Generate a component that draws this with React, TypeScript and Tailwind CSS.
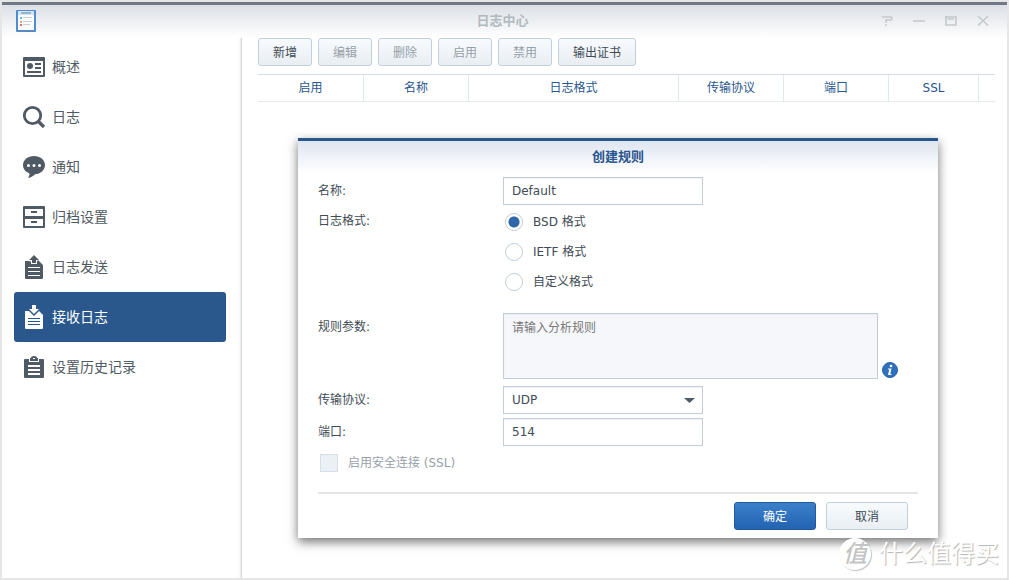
import type { ReactNode } from 'react';
import { clsx } from 'clsx';

interface NavItem {
  label: string;
  icon: ReactNode;
  active?: boolean;
}

const NAV_ITEMS: NavItem[] = [
  {
    label: '概述',
    icon: (
      <path
        fillRule="evenodd"
        d="M2 2h20a1 1 0 011 1v18a1 1 0 01-1 1H2a1 1 0 01-1-1V3a1 1 0 011-1zM3 6v14h18V6zM8 8a3 3 0 110 6 3 3 0 010-6zM13 8h6v2h-6zM13 12h6v2h-6zM5 16h14v2H5z"
      />
    ),
  },
  {
    label: '日志',
    icon: (
      <>
        <circle cx="10.5" cy="10.5" r="8.2" fill="none" stroke="currentColor" strokeWidth="2.8" />
        <path d="M16.5 16.5l5.5 5.5" fill="none" stroke="currentColor" strokeWidth="3.2" />
      </>
    ),
  },
  {
    label: '通知',
    icon: (
      <path
        fillRule="evenodd"
        d="M12 1c6.1 0 11 3.9 11 9s-4.500 9-10 9.200C11.500 20.800 9 22.600 6 23c1-1.200 1.500-2.600 1.500-4.500C3.600 17 1 13.900 1 10c0-5.100 4.900-9 11-9zM6.500 9a1.500 1.500 0 100 3 1.500 1.500 0 000-3zM12 9a1.500 1.500 0 100 3 1.500 1.500 0 000-3zM17.500 9a1.500 1.500 0 100 3 1.500 1.500 0 000-3z"
      />
    ),
  },
  {
    label: '归档设置',
    icon: (
      <path
        fillRule="evenodd"
        d="M2 1h20a1 1 0 011 1v20a1 1 0 01-1 1H2a1 1 0 01-1-1V2a1 1 0 011-1zM3 4v7h18V4zM3 14v7h18v-7zM9 6h6v2H9zM9 16h6v2H9z"
      />
    ),
  },
  {
    label: '日志发送',
    icon: (
      <path
        fillRule="evenodd"
        d="M12 0l5 5h-3v3h-4V5H7zM3 6h3l3 0.500V9h6V6.500L16 5l5 5v13a1 1 0 01-1 1H4a1 1 0 01-1-1zM6 12v1h12v-1zM6 16v1h12v-1zM6 20v1h12v-1z"
      />
    ),
  },
  {
    label: '接收日志',
    active: true,
    icon: (
      <path
        fillRule="evenodd"
        d="M10 0h4v4h3l-5 5-5-5h3zM3 6h4l5 5 5-5 4 4v13a1 1 0 01-1 1H4a1 1 0 01-1-1zM6 13v1h12v-1zM6 16v1h12v-1zM6 19v1h12v-1z"
      />
    ),
  },
  {
    label: '设置历史记录',
    icon: (
      <path
        fillRule="evenodd"
        d="M3 4h4v3h10V4h4a1 1 0 011 1v17a1 1 0 01-1 1H3a1 1 0 01-1-1V5a1 1 0 011-1zM9 3a3 2 0 016 0h1v3H8V3zM11 3v1h2V3zM6 10v2h12v-2zM6 14v2h12v-2zM6 18v2h12v-2z"
      />
    ),
  },
];

const TOOLBAR = [
  { label: '新增', enabled: true },
  { label: '编辑', enabled: false },
  { label: '删除', enabled: false },
  { label: '启用', enabled: false },
  { label: '禁用', enabled: false },
  { label: '输出证书', enabled: true },
];

const COLUMNS = [
  { label: '启用', width: 'w-[106px]' },
  { label: '名称', width: 'w-[105px]' },
  { label: '日志格式', width: 'w-[210px]' },
  { label: '传输协议', width: 'w-[105px]' },
  { label: '端口', width: 'w-[105px]' },
  { label: 'SSL', width: 'w-[90px]' },
];

const FORMATS = [
  { value: 'bsd', label: 'BSD 格式' },
  { value: 'ietf', label: 'IETF 格式' },
  { value: 'custom', label: '自定义格式' },
];

const WINDOW_CONTROLS = [
  { label: '帮助', icon: <path d="M1 2h9q1 0 1 1v1q0 1-1 1H5v3M4 10h2" /> },
  { label: '最小化', icon: <path d="M0 6h12" /> },
  { label: '最大化', icon: <path d="M0 2h12M1 1v9h10V1M3 4h6" /> },
  { label: '关闭', icon: <path d="M1 1l10 9.500M11 1L1 10.500" /> },
];

const LABEL = 'w-[185px] shrink-0 leading-7';
const FIELD =
  'border border-[#c3cdda] bg-white px-2 text-[#414b55] outline-none shadow-[inset_0_1px_1px_#eef1f4]';
const BUTTON = 'h-7 rounded-[3px] border pt-0.5 text-center leading-4';
const LIGHT_BUTTON = 'border-[#c3cfdb] bg-linear-to-b from-[#f7fbfe] to-[#e9eef3]';

function TitleBar() {
  return (
    <header className="flex h-9 items-center border-t-[3px] border-[#717885] bg-linear-to-b from-[#dce0e6] to-white px-[14px] pb-0.5">
      <div className="flex-1">
        <svg className="h-6 w-5" viewBox="0 0 20 24">
          <rect y="1" width="20" height="22" rx="1" fill="#4f8bd2" />
          <rect x="2" y="2" width="16" height="20" fill="#f9fbfd" />
          <rect x="2" y="2" width="16" height="4" fill="#d4e6fb" />
          <rect x="5" y="3" width="10" height="2" fill="#9eb0c8" />
          <rect x="4" y="8" width="2" height="2" fill="#66b1e2" />
          <rect x="4" y="12" width="2" height="2" fill="#eda66b" />
          <rect x="4" y="15" width="2" height="2" fill="#d96d6d" />
          <path d="M7 8.500h9M7 12.500h9M7 15.500h7" stroke="#c9ced3" />
          <path d="M1 21.500h18" stroke="#6288b2" />
        </svg>
      </div>
      <h1 className="text-[13px] font-bold leading-5 text-[#b2babf]">日志中心</h1>
      <div className="flex flex-1 justify-end gap-5 pr-1">
        {WINDOW_CONTROLS.map((control) => (
          <button key={control.label} type="button" aria-label={control.label}>
            <svg
              className="h-3 w-3"
              viewBox="0 0 12 12"
              fill="none"
              stroke="#c5c9cc"
              strokeWidth="1.6"
            >
              {control.icon}
            </svg>
          </button>
        ))}
      </div>
    </header>
  );
}

function Sidebar() {
  return (
    <nav className="w-60 shrink-0 border-r border-[#d8d8d8] pt-1 pr-[15px] pl-3 shadow-[inset_-2px_0_2px_-1px_#e6e6e6]">
      {NAV_ITEMS.map((item) => (
        <a
          key={item.label}
          href="#"
          className={clsx(
            'flex h-[50px] items-center gap-1.5 rounded-[3px] pl-2 text-sm',
            item.active ? 'bg-[#2a588c] text-white' : 'text-[#505a64]',
          )}
        >
          <svg className="h-6 w-6" viewBox="0 0 24 24" fill="currentColor">
            {item.icon}
          </svg>
          <span>{item.label}</span>
        </a>
      ))}
    </nav>
  );
}

function RuleDialog() {
  return (
    <form
      role="dialog"
      aria-labelledby="dialog-title"
      className="mt-9 ml-10 max-w-[640px] border-t-[3px] border-[#2a568e] bg-white pb-2 shadow-[0_4px_10px_rgba(0,0,0,0.55)]"
    >
      <h2
        id="dialog-title"
        className="h-8 bg-linear-to-b from-[#dfe5f0] to-white text-center text-[13px] leading-8 font-bold text-[#2a568e]"
      >
        创建规则
      </h2>

      <div className="px-5 pt-1">
        <div className="flex">
          <label htmlFor="name" className={LABEL}>名称:</label>
          <input id="name" defaultValue="Default" className={clsx(FIELD, 'h-7 w-[200px]')} />
        </div>

        <fieldset className="mt-0.5 flex">
          <legend className="float-left w-[185px] shrink-0 leading-7">日志格式:</legend>
          <div>
            {FORMATS.map((format) => (
              <label key={format.value} className="flex h-[30px] items-center gap-2.5 pl-0.5">
                <input
                  type="radio"
                  name="format"
                  value={format.value}
                  defaultChecked={format.value === 'bsd'}
                  className="h-[18px] w-[18px] appearance-none rounded-full border border-[#c3cdda] bg-white checked:bg-radial checked:from-[#2e66a8] checked:from-[5px] checked:to-white checked:to-[6px]"
                />
                {format.label}
              </label>
            ))}
          </div>
        </fieldset>

        <div className="mt-4 flex">
          <label htmlFor="params" className={LABEL}>规则参数:</label>
          <textarea
            id="params"
            placeholder="请输入分析规则"
            className="h-[66px] w-[375px] resize-none border border-[#c3cdda] bg-[#f6f7fa] px-2 py-1 leading-5 shadow-[inset_0_1px_1px_#e9ecf0] outline-none placeholder:text-[#777777]"
          />
          <div className="flex items-end pb-px pl-1">
            <svg className="h-4 w-4" viewBox="0 0 16 16" role="img" aria-label="说明">
              <circle cx="8" cy="8" r="7.5" fill="#2f70ba" stroke="#2462aa" />
              <circle cx="9" cy="4" r="1.3" fill="#fff" />
              <path d="M6 6.500h3.500L8.300 12h1.200v1H6l1.300-5.500H6z" fill="#fff" />
            </svg>
          </div>
        </div>

        <div className="mt-[7px] flex">
          <label htmlFor="protocol" className={LABEL}>传输协议:</label>
          <div className="relative">
            <select id="protocol" className={clsx(FIELD, 'h-7 w-[200px] appearance-none')}>
              <option>UDP</option>
            </select>
            <svg
              className="pointer-events-none absolute top-3 right-2 h-[5px] w-[11px]"
              viewBox="0 0 11 5"
            >
              <path d="M0 0h11L5.500 5z" fill="#505a64" />
            </svg>
          </div>
        </div>

        <div className="mt-1 flex">
          <label htmlFor="port" className={LABEL}>端口:</label>
          <input id="port" defaultValue="514" className={clsx(FIELD, 'h-7 w-[200px]')} />
        </div>

        <label className="mt-0.5 flex h-[30px] items-center gap-2.5 pl-0.5 text-[#979fa8]">
          <input
            type="checkbox"
            disabled
            className="h-[18px] w-[18px] appearance-none border border-[#d5dfea] bg-[#ebf0f5]"
          />
          启用安全连接 (SSL)
        </label>

        <div className="mt-[14px] flex justify-end gap-2.5 border-t-2 border-[#e4e4e4] pt-2 pr-2.5">
          <button
            type="submit"
            className={clsx(
              BUTTON,
              'w-[82px] border-[#1f59a0] bg-linear-to-b from-[#3b80cb] to-[#2363b1] text-white',
            )}
          >
            确定
          </button>
          <button type="button" className={clsx(BUTTON, LIGHT_BUTTON, 'w-[82px]')}>
            取消
          </button>
        </div>
      </div>
    </form>
  );
}

function Watermark() {
  return (
    <div className="pointer-events-none absolute right-2 bottom-2 flex items-center gap-2">
      <span className="flex h-8 w-8 items-center justify-center rounded-full bg-white text-[24px] leading-8 font-medium text-[#c4c4c4] italic shadow-[1px_1px_1px_#c4c4c4]">
        值
      </span>
      <span className="text-[24px] leading-8 text-white [text-shadow:1px_1px_1px_#b4b4b4]">
        什么值得买
      </span>
    </div>
  );
}

export default function App() {
  return (
    <div className="relative flex min-h-screen flex-col border-2 border-[#e6e6e6] bg-white font-['DejaVu_Sans','Noto_Sans_CJK_SC',sans-serif] text-xs text-[#414b55]">
      <TitleBar />
      <div className="flex flex-1">
        <Sidebar />
        <main className="min-w-0 flex-1 pr-3 pb-8 pl-4">
          <div className="flex gap-1.5">
            {TOOLBAR.map((button) => (
              <button
                key={button.label}
                type="button"
                disabled={!button.enabled}
                className={clsx(BUTTON, LIGHT_BUTTON, 'px-[14px] disabled:text-[#979fa8]')}
              >
                {button.label}
              </button>
            ))}
          </div>

          <table className="mt-2 w-full table-fixed border-separate border-spacing-0 border-t border-[#d2deea] text-[#2a568e]">
            <thead>
              <tr>
                {COLUMNS.map((column) => (
                  <th
                    key={column.label}
                    className={clsx(
                      'h-[27px] border-r border-b border-r-[#dce8f4] border-b-[#e6ebf0] p-0 font-normal',
                      column.width,
                    )}
                  >
                    {column.label}
                  </th>
                ))}
                <td className="border-b border-[#e6ebf0] p-0" />
              </tr>
            </thead>
          </table>

          <RuleDialog />
        </main>
      </div>
      <Watermark />
    </div>
  );
}
